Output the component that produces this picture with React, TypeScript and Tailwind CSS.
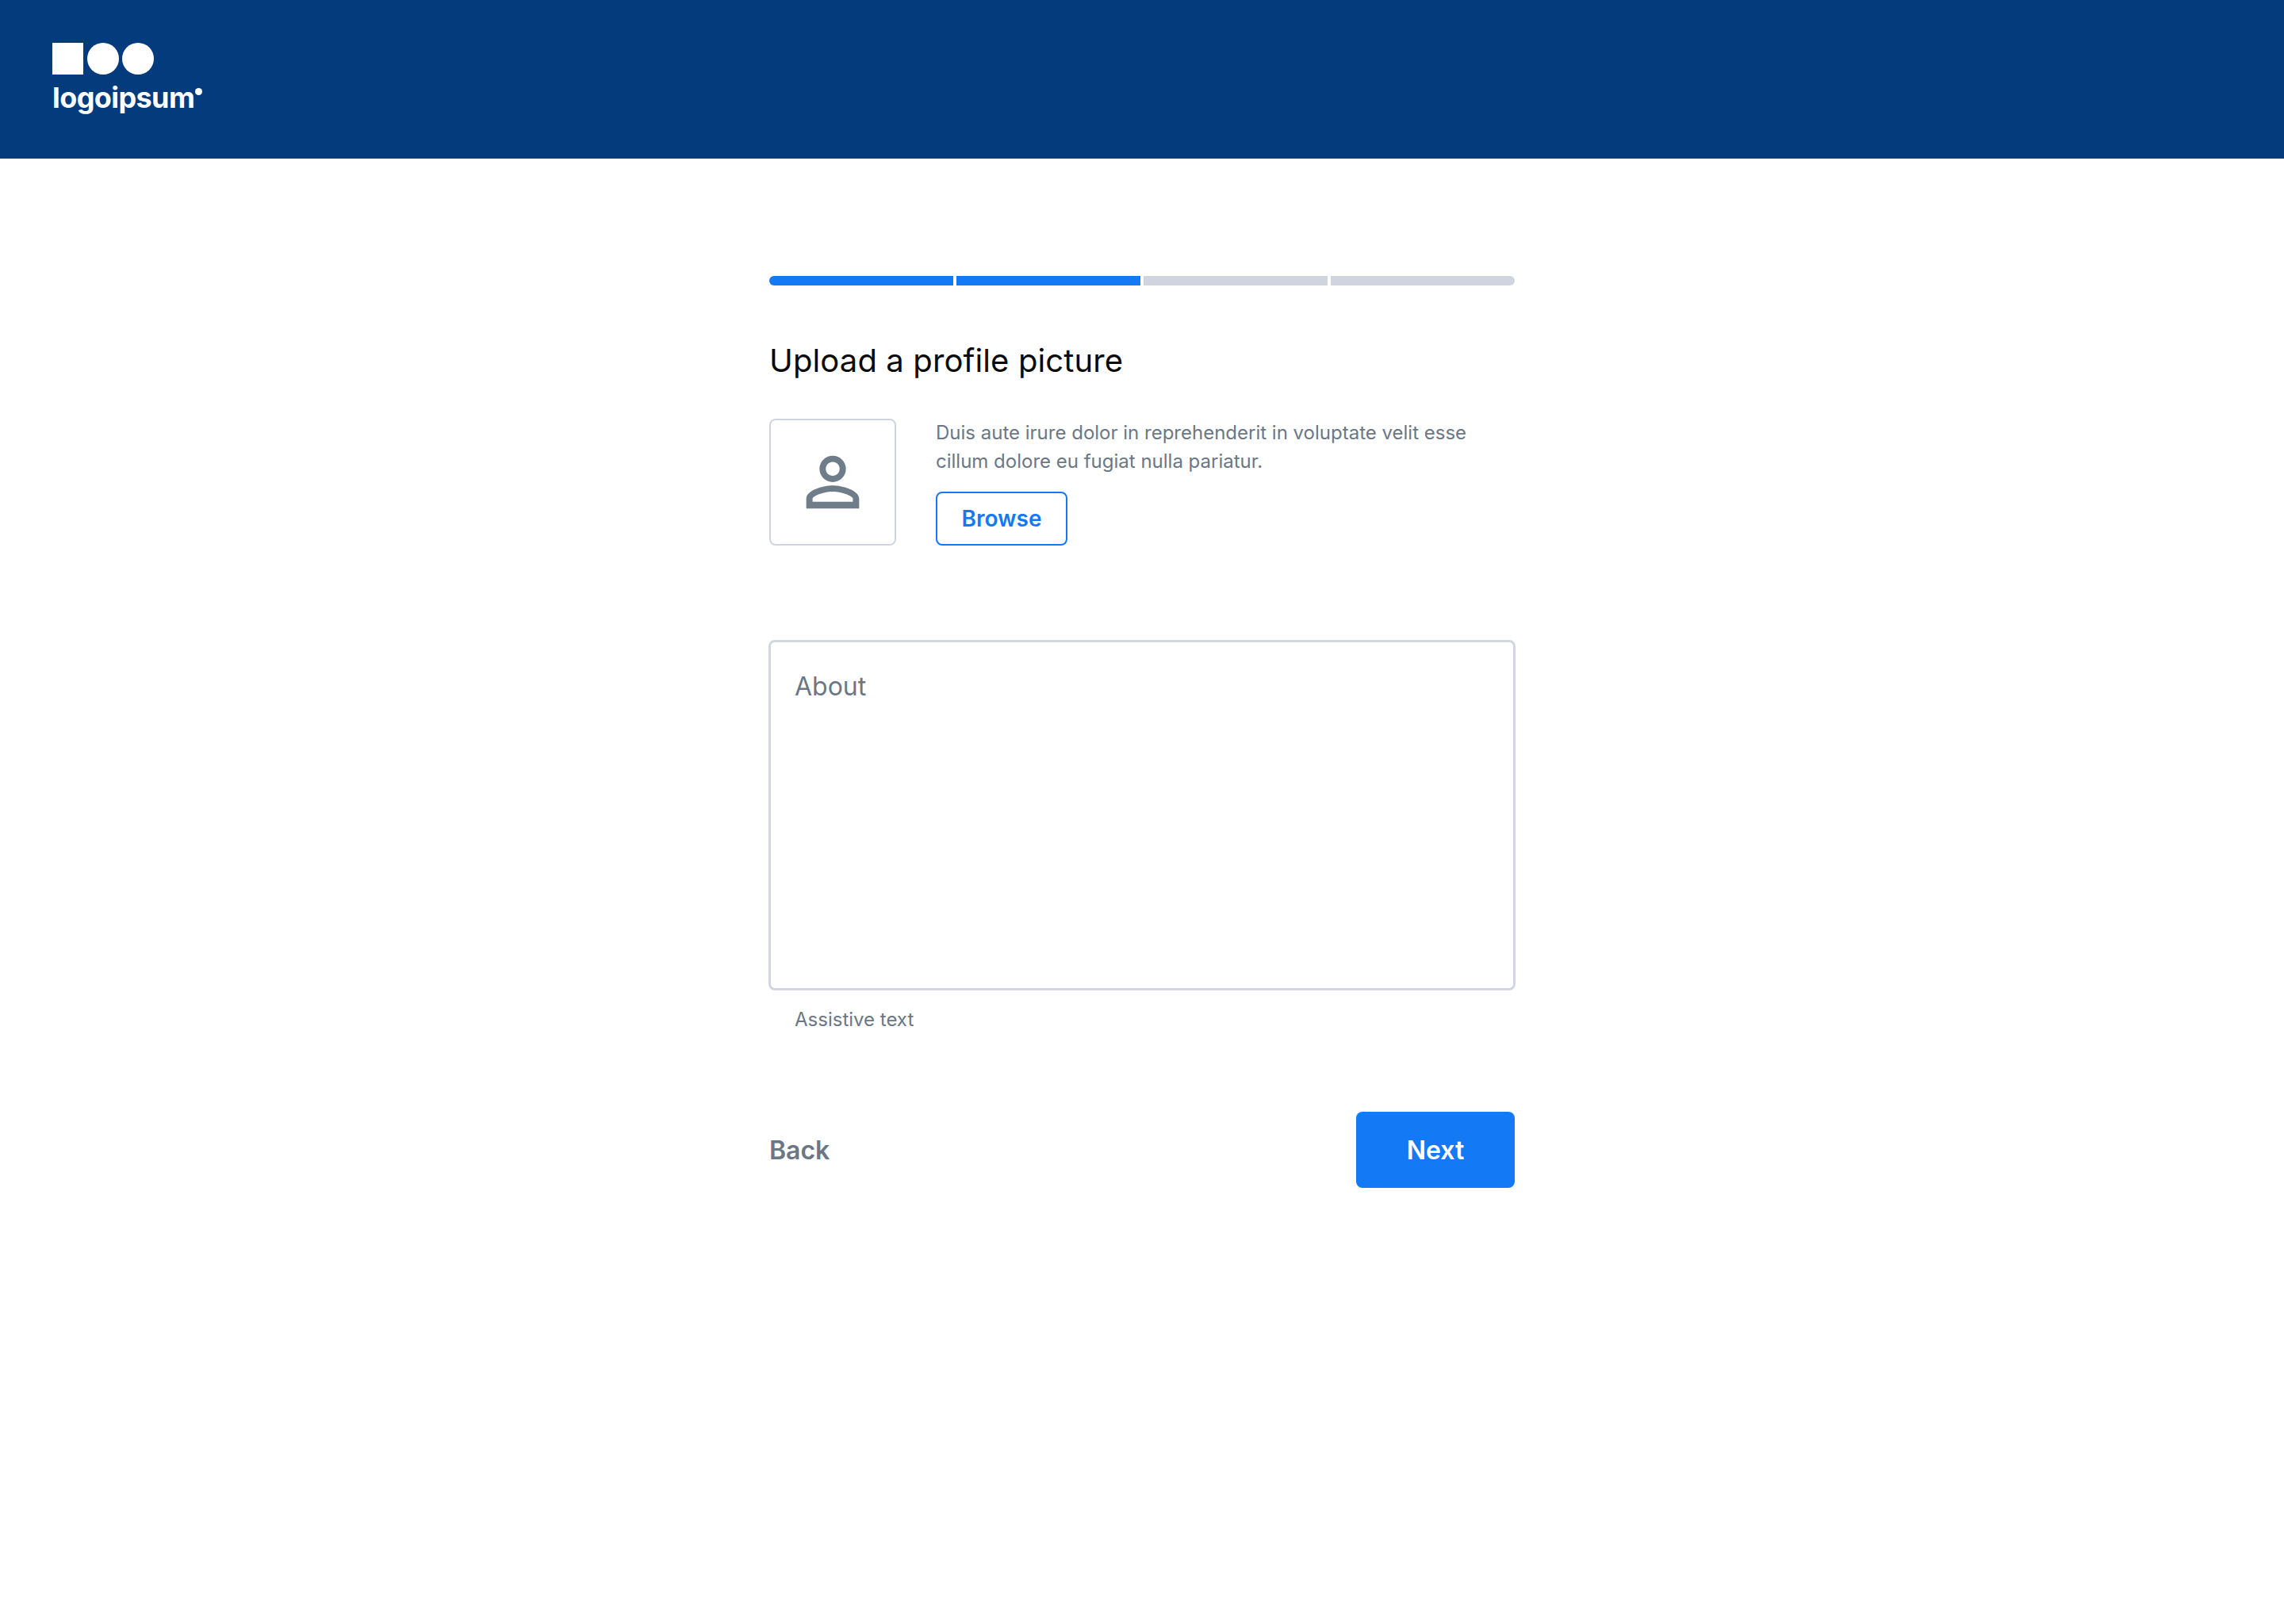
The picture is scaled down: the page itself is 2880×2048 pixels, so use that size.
export default function App() {
  const steps = [true, true, false, false];

  return (
    <div className="min-h-screen bg-white font-['Inter',sans-serif]">
      <header className="flex h-[200px] flex-col items-start bg-[#033b7d] pl-[66px] pt-[54px]">
        <svg width="128" height="40" viewBox="0 0 128 40" fill="white">
          <rect x="0" y="0" width="39" height="40" />
          <circle cx="64" cy="20" r="20" />
          <circle cx="108" cy="20" r="20" />
        </svg>
        <div className="relative mt-[4px] text-[36px] leading-[50px] font-bold tracking-[-0.6px] text-white">
          logoipsum
          <span className="absolute top-[13px] -right-[10px] h-[9px] w-[9px] rounded-full bg-white" />
        </div>
      </header>

      <main className="mx-auto w-[940px] pt-[148px]">
        <div className="flex gap-1">
          {steps.map((done, i) => (
            <div
              key={i}
              className={`h-3 flex-1 first:rounded-l-full last:rounded-r-full ${done ? 'bg-[#1479f5]' : 'bg-[#d0d4df]'}`}
            />
          ))}
        </div>

        <h1 className="mt-[65px] text-[40px] leading-[60px] font-normal tracking-[0.12px] text-[#0a0a0a]">Upload a profile picture</h1>

        <div className="mt-[43px] flex gap-[50px]">
          <div className="flex h-[160px] w-[160px] items-center justify-center rounded-lg border-2 border-[#d0d4df]">
            <svg width="100" height="100" viewBox="0 0 24 24" fill="#6f7c89">
              <path d="M12 5.9c1.16 0 2.1.94 2.1 2.1s-.94 2.1-2.1 2.1S9.9 9.16 9.9 8s.94-2.1 2.1-2.1m0 9c2.97 0 6.1 1.46 6.1 2.1v.95H5.9V17c0-.64 3.13-2.1 6.1-2.1M12 4C9.79 4 8 5.79 8 8s1.79 4 4 4 4-1.79 4-4-1.79-4-4-4zm0 9c-2.67 0-8 1.34-8 4v3h16v-3c0-2.66-5.33-4-8-4z" />
            </svg>
          </div>
          <div className="flex flex-1 flex-col items-start">
            <p className="text-2xl leading-[36px] text-[#6b7785]">
              Duis aute irure dolor in reprehenderit in voluptate velit esse
              <br />
              cillum dolore eu fugiat nulla pariatur.
            </p>
            <button className="mt-auto h-[68px] w-[166px] rounded-lg border-2 border-[#1479f5] text-[28px] font-semibold text-[#1479f5]">
              Browse
            </button>
          </div>
        </div>

        <textarea
          placeholder="About"
          className="mt-[119px] -ml-px block h-[442px] w-[942px] resize-none rounded-lg border-[3px] border-[#d3d7e1] px-[30px] py-[36px] text-[32px] leading-[40px] outline-none placeholder:text-[#6b7785]"
        />
        <p className="mt-[19px] pl-[32px] text-2xl leading-[36px] text-[#6b7785]">Assistive text</p>

        <div className="mt-[98px] flex items-center justify-between">
          <button className="pt-px text-[32px] font-semibold text-[#6b7785]">Back</button>
          <button className="h-24 w-[200px] rounded-lg bg-[#1479f5] pt-px text-[32px] font-semibold text-white">Next</button>
        </div>
      </main>
    </div>
  );
}
